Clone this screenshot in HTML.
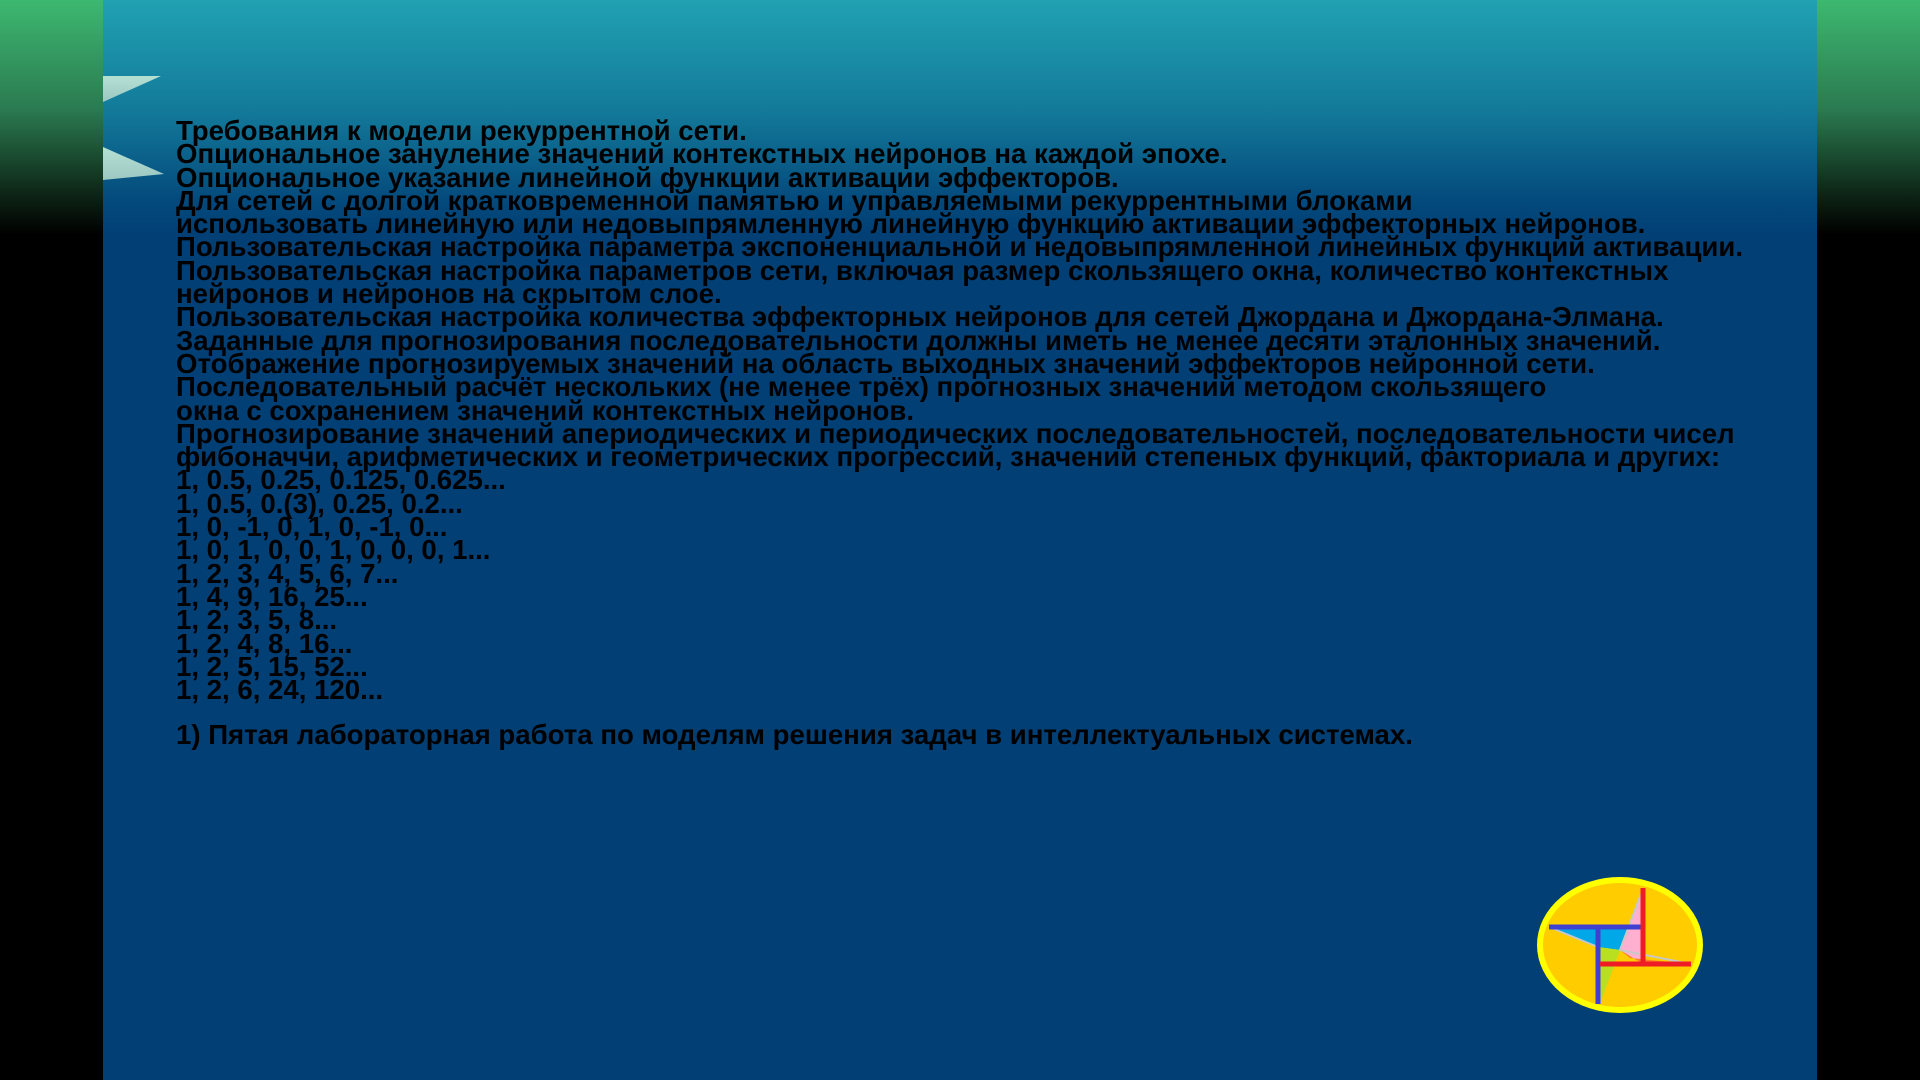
<!DOCTYPE html>
<html><head><meta charset="utf-8"><style>
html,body{margin:0;padding:0;width:1920px;height:1080px;overflow:hidden;background:#000}
.side{position:absolute;top:0;width:103px;height:1080px;background:linear-gradient(#3db870 0px,#2a7a50 110px,#0b1f12 200px,#000 235px,#000 1080px)}
.main{position:absolute;left:103px;top:0;width:1714px;height:1080px;background:linear-gradient(#21a1b2 0px,#137a9a 110px,#044a7c 200px,#013f75 235px,#013f75 1080px)}
.txt{position:absolute;left:176px;top:119px;font-family:"Liberation Sans",sans-serif;font-weight:bold;font-size:27.6px;line-height:23.3px;color:#000;white-space:pre;letter-spacing:0}
.last{position:absolute;left:176px;top:720px;font-family:"Liberation Sans",sans-serif;font-weight:bold;font-size:27.6px;line-height:30px;color:#000;white-space:pre}
</style></head><body>
<div class="side" style="left:0"></div>
<div class="side" style="left:1817px"></div>
<div class="main"></div>
<svg style="position:absolute;left:0;top:0" width="1920" height="1080">
<defs><linearGradient id="tg" x1="0" y1="0" x2="0" y2="1"><stop offset="0" stop-color="#b5e0d4"/><stop offset="1" stop-color="#9cc8c2"/></linearGradient></defs>
<polygon points="103,76 161,76 103,102" fill="url(#tg)"/>
<polygon points="103,147 164,174 103,180" fill="url(#tg)"/>
<ellipse cx="1620" cy="945" rx="80" ry="65" fill="#ffcc00" stroke="#ffff00" stroke-width="6"/>
<polygon points="1549,927 1641,927 1620,950 1598,947" fill="#00a8e8"/>
<polygon points="1641,894 1643,964 1620,950" fill="#ffb0d0"/>
<polygon points="1598,947 1620,950 1600,1004" fill="#b8e020"/>
<polygon points="1620,950 1643,964 1691,964 1630,958" fill="#ff8020"/>
<path d="M1549,927 L1598,947 L1600,1004 M1641,894 L1620,950 L1691,964" stroke="#c8c8c8" stroke-width="2" fill="none"/>
<path d="M1549,927 H1641 M1598,927 V1004" stroke="#4040d0" stroke-width="5" fill="none"/>
<path d="M1643,888 V964 M1600,964 H1691" stroke="#ee1c24" stroke-width="5" fill="none"/>
</svg>
<div class="txt">Требования к модели рекуррентной сети.
Опциональное зануление значений контекстных нейронов на каждой эпохе.
Опциональное указание линейной функции активации эффекторов.
Для сетей с долгой кратковременной памятью и управляемыми рекуррентными блоками
использовать линейную или недовыпрямленную линейную функцию активации эффекторных нейронов.
Пользовательская настройка параметра экспоненциальной и недовыпрямленной линейных функций активации.
Пользовательская настройка параметров сети, включая размер скользящего окна, количество контекстных
нейронов и нейронов на скрытом слое.
Пользовательская настройка количества эффекторных нейронов для сетей Джордана и Джордана-Элмана.
Заданные для прогнозирования последовательности должны иметь не менее десяти эталонных значений.
Отображение прогнозируемых значений на область выходных значений эффекторов нейронной сети.
Последовательный расчёт нескольких (не менее трёх) прогнозных значений методом скользящего
окна с сохранением значений контекстных нейронов.
Прогнозирование значений апериодических и периодических последовательностей, последовательности чисел
фибоначчи, арифметических и геометрических прогрессий, значений степеных функций, факториала и других:
1, 0.5, 0.25, 0.125, 0.625...
1, 0.5, 0.(3), 0.25, 0.2...
1, 0, -1, 0, 1, 0, -1, 0...
1, 0, 1, 0, 0, 1, 0, 0, 0, 1...
1, 2, 3, 4, 5, 6, 7...
1, 4, 9, 16, 25...
1, 2, 3, 5, 8...
1, 2, 4, 8, 16...
1, 2, 5, 15, 52...
1, 2, 6, 24, 120...</div>
<div class="last">1) Пятая лабораторная работа по моделям решения задач в интеллектуальных системах.</div>
</body></html>
